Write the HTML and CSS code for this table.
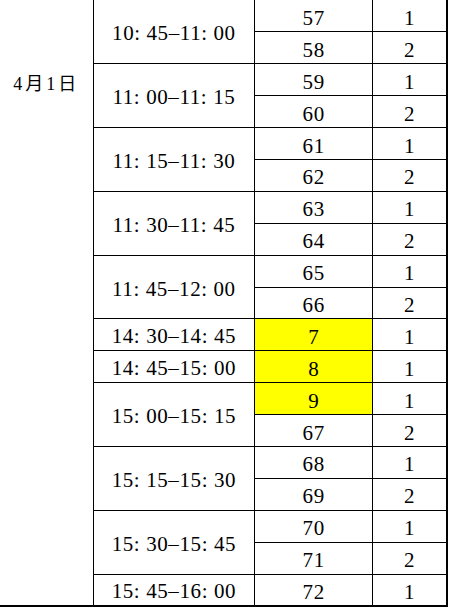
FILE: index.html
```html
<!DOCTYPE html>
<html lang="zh-CN">
<head>
<meta charset="utf-8">
<title>4月1日 时段安排</title>
<link rel="stylesheet" href="styles.css">
</head>
<body>
<table class="schedule">
  <colgroup>
    <col class="c-date">
    <col class="c-time">
    <col class="c-no">
    <col class="c-qty">
  </colgroup>
  <tbody>
    <tr class="first">
      <td class="date" rowspan="19">4月1日</td>
      <td class="time" rowspan="2">10: 45–11: 00</td>
      <td class="no">57</td><td class="qty">1</td>
    </tr>
    <tr><td class="no">58</td><td class="qty">2</td></tr>
    <tr>
      <td class="time" rowspan="2">11: 00–11: 15</td>
      <td class="no">59</td><td class="qty">1</td>
    </tr>
    <tr><td class="no">60</td><td class="qty">2</td></tr>
    <tr>
      <td class="time" rowspan="2">11: 15–11: 30</td>
      <td class="no">61</td><td class="qty">1</td>
    </tr>
    <tr><td class="no">62</td><td class="qty">2</td></tr>
    <tr>
      <td class="time" rowspan="2">11: 30–11: 45</td>
      <td class="no">63</td><td class="qty">1</td>
    </tr>
    <tr><td class="no">64</td><td class="qty">2</td></tr>
    <tr>
      <td class="time" rowspan="2">11: 45–12: 00</td>
      <td class="no">65</td><td class="qty">1</td>
    </tr>
    <tr><td class="no">66</td><td class="qty">2</td></tr>
    <tr>
      <td class="time">14: 30–14: 45</td>
      <td class="no mark">7</td><td class="qty">1</td>
    </tr>
    <tr>
      <td class="time">14: 45–15: 00</td>
      <td class="no mark">8</td><td class="qty">1</td>
    </tr>
    <tr>
      <td class="time" rowspan="2">15: 00–15: 15</td>
      <td class="no mark">9</td><td class="qty">1</td>
    </tr>
    <tr><td class="no">67</td><td class="qty">2</td></tr>
    <tr>
      <td class="time" rowspan="2">15: 15–15: 30</td>
      <td class="no">68</td><td class="qty">1</td>
    </tr>
    <tr><td class="no">69</td><td class="qty">2</td></tr>
    <tr>
      <td class="time" rowspan="2">15: 30–15: 45</td>
      <td class="no">70</td><td class="qty">1</td>
    </tr>
    <tr><td class="no">71</td><td class="qty">2</td></tr>
    <tr class="last">
      <td class="time">15: 45–16: 00</td>
      <td class="no">72</td><td class="qty">1</td>
    </tr>
  </tbody>
</table>
</body>
</html>
```

FILE: styles.css
```css
html, body {
  margin: 0;
  padding: 0;
  background: #ffffff;
}

body {
  font-family: "Liberation Serif", "Noto Sans CJK SC", serif;
  color: #000000;
}

.schedule {
  border-collapse: collapse;
  table-layout: fixed;
  width: 448px;
  font-size: 21px;
}

.c-date { width: 93px; }
.c-time { width: 161px; }
.c-no { width: 118px; }
.c-qty { width: 74px; }

.schedule tr {
  height: 31.9px;
}

.schedule td {
  border: 1px solid #000000;
  padding: 3px 0 0;
  text-align: center;
  vertical-align: middle;
  line-height: 24px;
  letter-spacing: 0.6px;
  white-space: nowrap;
}

.schedule .no,
.schedule .qty {
  padding-top: 4px;
}

.schedule .first td {
  border-top: none;
}

.schedule .date {
  border-left: none;
  border-top: none;
  border-bottom: 2px solid #000000;
  vertical-align: top;
  font-size: 18px;
  letter-spacing: 3px;
  padding: 72px 0 0 0;
}

.schedule .qty {
  border-right: 2px solid #000000;
}

.schedule .last td {
  border-bottom: 2px solid #000000;
}

.schedule .mark {
  background: #ffff00;
}
```
